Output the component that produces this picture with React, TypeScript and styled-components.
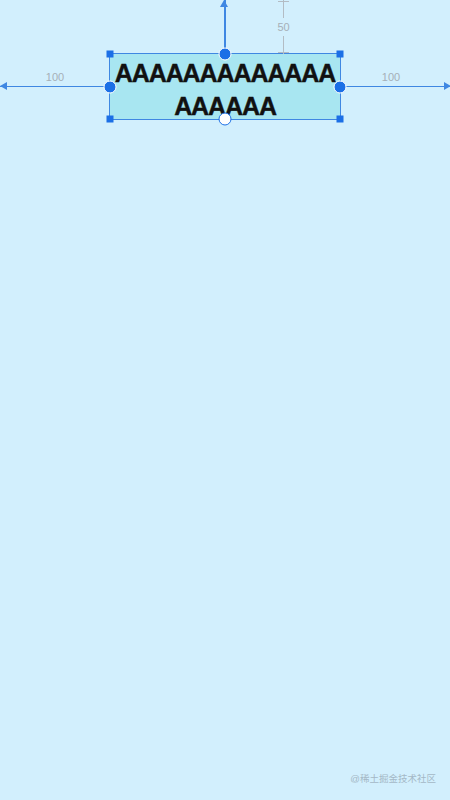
import React from "react";
import styled, { createGlobalStyle } from "styled-components";

const Global = createGlobalStyle`
  html, body { margin: 0; padding: 0; background: #d2effd; }
  body { font-family: "Liberation Sans", Arial, sans-serif; }
`;

const BLUE = "#1b6fe6";
const LINE = "#3f87e2";
const GRAY = "#a6b0b8";

const Page = styled.div`
  position: relative;
  width: 450px;
  min-height: 800px;
  box-sizing: border-box;
  padding-top: 53px;
  background: #d2effd;
  overflow: hidden;
  display: flex;
  flex-direction: column;
`;

const Box = styled.div`
  position: relative;
  margin-left: 109px;
  width: 232px;
  height: 67px;
  box-sizing: border-box;
  border: 1px solid ${LINE};
  background: #a8e6f1;
  padding-top: 3px;
  text-align: center;
  word-break: break-all;
  font-family: "Liberation Sans", Arial, sans-serif;
  font-weight: 700;
  font-size: 25px;
  line-height: 33px;
  letter-spacing: -1.1px;
  color: #111;
  -webkit-text-stroke: 0.4px #111;
`;

const Handle = styled.span<{ $x: string; $y: string; $hollow?: boolean }>`
  position: absolute;
  left: ${(p) => p.$x};
  top: ${(p) => p.$y};
  width: 13px;
  height: 13px;
  box-sizing: border-box;
  border-radius: 50%;
  transform: translate(-50%, -50%);
  background: ${(p) => (p.$hollow ? "#fff" : BLUE)};
  border: ${(p) => (p.$hollow ? `1px solid ${BLUE}` : "1.5px solid #fff")};
  z-index: 3;
`;

const Corner = styled.span<{ $x: string; $y: string }>`
  position: absolute;
  left: ${(p) => p.$x};
  top: ${(p) => p.$y};
  width: 7px;
  height: 7px;
  background: ${BLUE};
  transform: translate(-50%, -50%);
  z-index: 3;
`;

const HArrow = styled.span<{ $side: "left" | "right" }>`
  position: absolute;
  top: 50%;
  height: 1.5px;
  margin-top: -0.75px;
  box-sizing: border-box;
  background: ${LINE};
  display: flex;
  justify-content: center;
  ${(p) =>
    p.$side === "left"
      ? "right: 100%; width: 110px;"
      : "left: 100%; width: 111px; padding-right: 9px;"}
  &::after {
    content: "";
    position: absolute;
    top: -4px;
    ${(p) =>
      p.$side === "left"
        ? `left: 0; border-right: 7px solid ${LINE};`
        : `right: 0; border-left: 7px solid ${LINE};`}
    border-top: 4.5px solid transparent;
    border-bottom: 4.5px solid transparent;
  }
`;

const VArrow = styled.span`
  position: absolute;
  left: 50%;
  bottom: 100%;
  width: 1.5px;
  height: 54px;
  margin-left: -0.75px;
  background: ${LINE};
  &::after {
    content: "";
    position: absolute;
    top: 0;
    left: -4px;
    border-bottom: 7px solid ${LINE};
    border-left: 4.6px solid transparent;
    border-right: 4.6px solid transparent;
  }
`;

const Label = styled.span`
  margin-top: -14px;
  height: 11px;
  font-family: "Liberation Sans", Arial, sans-serif;
  font-size: 11px;
  font-weight: 400;
  letter-spacing: 0;
  line-height: 11px;
  color: ${GRAY};
  -webkit-text-stroke: 0;
`;

const Gauge = styled.div`
  position: absolute;
  left: 173px;
  bottom: 100%;
  height: 54px;
  width: 1px;
  display: flex;
  flex-direction: column;
  align-items: center;
`;

const GaugeLine = styled.span<{ $tick: "top" | "bottom" }>`
  position: relative;
  flex: none;
  width: 1px;
  height: 18px;
  background: #b3bcc4;
  &::after {
    content: "";
    position: absolute;
    left: -5px;
    width: 11px;
    height: 1px;
    background: #b3bcc4;
    ${(p) => (p.$tick === "top" ? "top: 1px;" : "bottom: 1px;")}
  }
`;

const GaugeText = styled.span`
  flex: none;
  height: 18px;
  display: flex;
  align-items: center;
  white-space: nowrap;
  font-family: "Liberation Sans", Arial, sans-serif;
  font-size: 11px;
  font-weight: 400;
  letter-spacing: 0;
  line-height: 1;
  color: ${GRAY};
  -webkit-text-stroke: 0;
`;

const Watermark = styled.div`
  position: absolute;
  right: 14px;
  bottom: 15px;
  font-family: "Liberation Sans", "Noto Sans CJK SC", sans-serif;
  font-size: 9.5px;
  color: #a4b8c6;
`;

export default function App() {
  return (
    <>
      <Global />
      <Page>
        <Box>
          AAAAAAAAAAAAAAAAAAA
          <VArrow />
          <HArrow $side="left">
            <Label>100</Label>
          </HArrow>
          <HArrow $side="right">
            <Label>100</Label>
          </HArrow>
          <Gauge>
            <GaugeLine $tick="top" />
            <GaugeText>50</GaugeText>
            <GaugeLine $tick="bottom" />
          </Gauge>
          <Corner $x="0" $y="0" />
          <Corner $x="100%" $y="0" />
          <Corner $x="0" $y="100%" />
          <Corner $x="100%" $y="100%" />
          <Handle $x="50%" $y="0" />
          <Handle $x="0" $y="50%" />
          <Handle $x="100%" $y="50%" />
          <Handle $x="50%" $y="100%" $hollow />
        </Box>
        <Watermark>@稀土掘金技术社区</Watermark>
      </Page>
    </>
  );
}
